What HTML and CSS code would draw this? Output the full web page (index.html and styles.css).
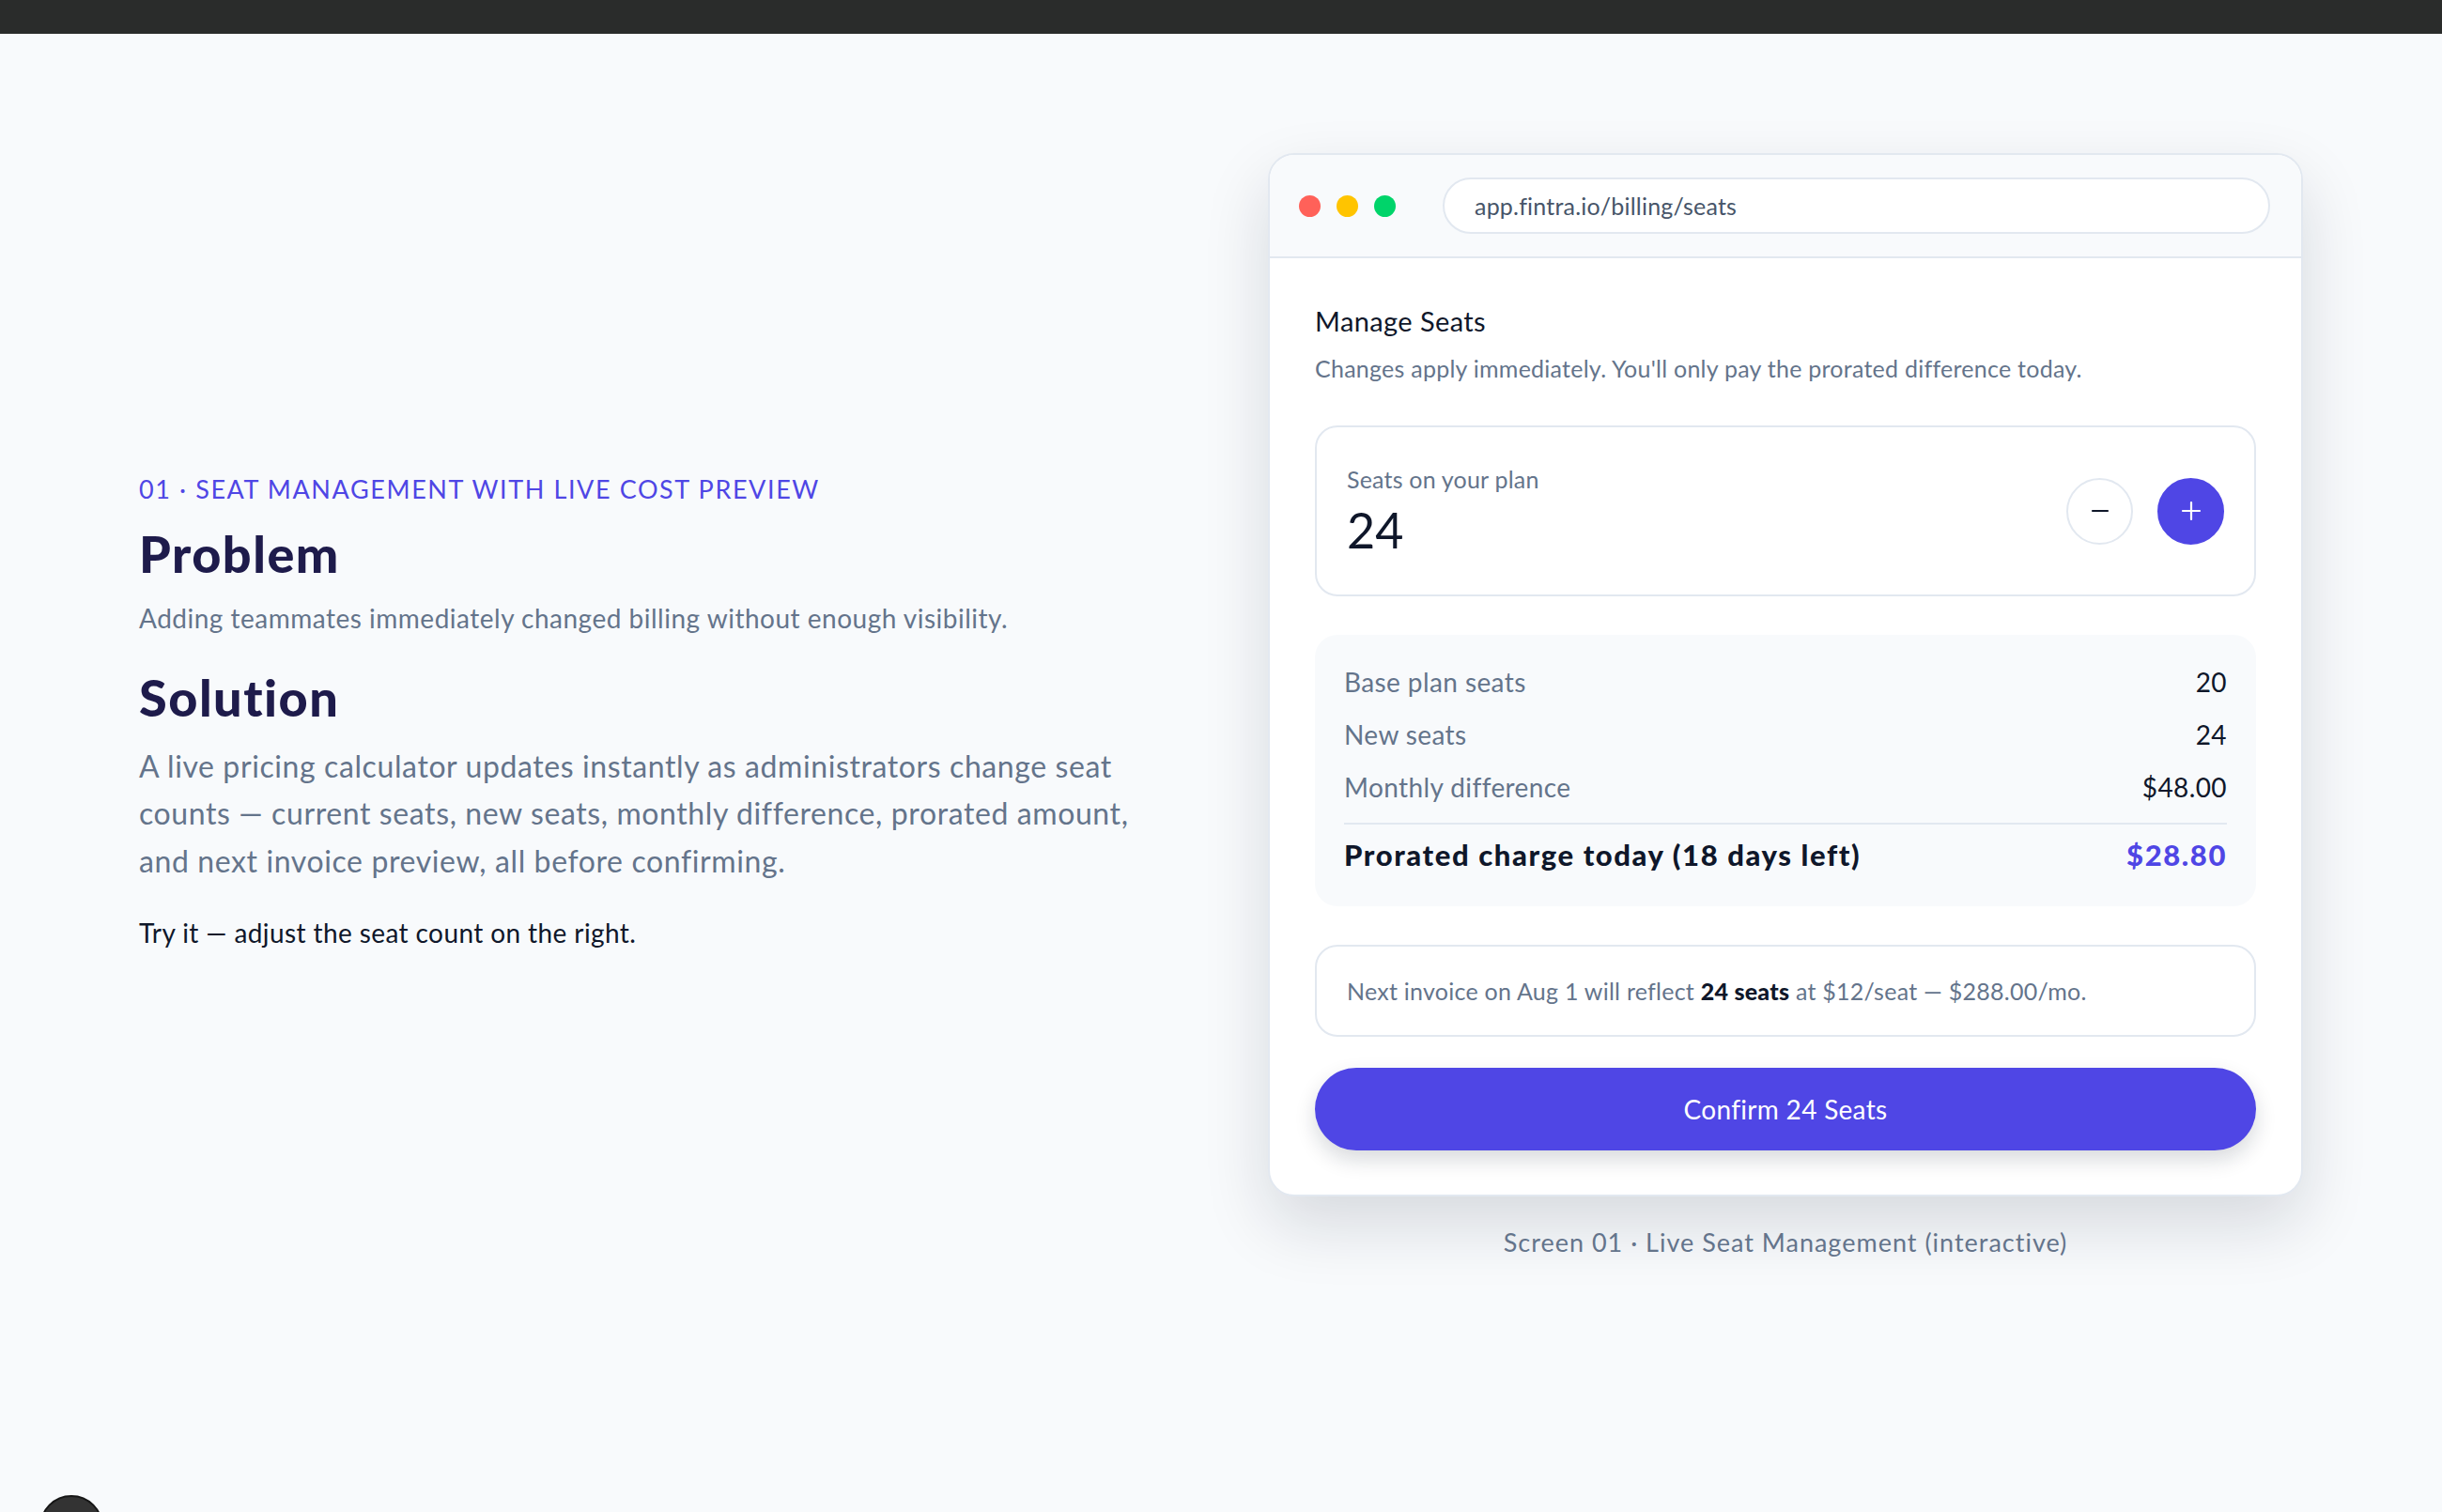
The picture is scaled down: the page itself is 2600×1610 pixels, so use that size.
FILE: index.html
```html
<!DOCTYPE html>
<html lang="en">
<head>
    <meta charset="UTF-8">
    <meta name="viewport" content="width=device-width, initial-scale=1.0">
    <title>Seat Management with Live Cost Preview</title>
    <link rel="stylesheet" href="styles.css">
</head>
<body>
    <div class="top-bar"></div>

    <main class="case-section">
        <div class="case-text">
            <p class="eyebrow">01 · Seat Management with Live Cost Preview</p>
            <h2 class="case-heading">Problem</h2>
            <p class="case-copy">Adding teammates immediately changed billing without enough visibility.</p>
            <h2 class="case-heading">Solution</h2>
            <p class="case-copy case-copy-large">A live pricing calculator updates instantly as administrators change seat counts — current seats, new seats, monthly difference, prorated amount, and next invoice preview, all before confirming.</p>
            <p class="case-hint">Try it — adjust the seat count on the right.</p>
        </div>

        <figure class="screen">
            <div class="browser-window">
                <div class="browser-bar">
                    <div class="dots">
                        <span class="dot dot-red"></span>
                        <span class="dot dot-yellow"></span>
                        <span class="dot dot-green"></span>
                    </div>
                    <div class="url-bar">app.fintra.io/billing/seats</div>
                </div>

                <div class="browser-body">
                    <h3 class="panel-title">Manage Seats</h3>
                    <p class="panel-subtitle">Changes apply immediately. You'll only pay the prorated difference today.</p>

                    <div class="seat-picker">
                        <div>
                            <div class="seat-label">Seats on your plan</div>
                            <div class="seat-count" id="seatCount">24</div>
                        </div>
                        <div class="stepper">
                            <button class="step-button" id="minusSeat" aria-label="Remove seat">
                                <svg width="22" height="22" viewBox="0 0 22 22"><path d="M3 11h16" stroke="#0f172a" stroke-width="2.2" stroke-linecap="round"/></svg>
                            </button>
                            <button class="step-button step-button-primary" id="plusSeat" aria-label="Add seat">
                                <svg width="24" height="24" viewBox="0 0 24 24"><path d="M12 3v18M3 12h18" stroke="#ffffff" stroke-width="2.2" stroke-linecap="round"/></svg>
                            </button>
                        </div>
                    </div>

                    <div class="summary">
                        <div class="summary-row">
                            <span>Base plan seats</span>
                            <span class="summary-value">20</span>
                        </div>
                        <div class="summary-row">
                            <span>New seats</span>
                            <span class="summary-value" id="newSeats">24</span>
                        </div>
                        <div class="summary-row">
                            <span>Monthly difference</span>
                            <span class="summary-value" id="monthlyDiff">$48.00</span>
                        </div>
                        <div class="summary-row summary-total">
                            <span>Prorated charge today (18 days left)</span>
                            <span class="summary-accent" id="prorated">$28.80</span>
                        </div>
                    </div>

                    <p class="invoice-note">Next invoice on Aug 1 will reflect <strong id="invoiceSeats">24 seats</strong> at $12/seat — <span id="invoiceTotal">$288.00</span>/mo.</p>

                    <button class="confirm-button" id="confirmButton">Confirm 24 Seats</button>
                </div>
            </div>
            <figcaption class="screen-caption">Screen 01 · Live Seat Management (interactive)</figcaption>
        </figure>
    </main>

    <button class="floating-button" aria-label="Menu"></button>

    <script src="script.js"></script>
</body>
</html>
```

FILE: styles.css
```css
/* Basic Reset */
* {
    margin: 0;
    padding: 0;
    box-sizing: border-box;
}

body {
    font-family: 'Lato', 'Noto Sans', sans-serif;
    background-color: #f8fafc;
    color: #0f172a;
    min-height: 100vh;
}

.top-bar {
    height: 36px;
    background-color: #2a2c2b;
}

.case-section {
    display: grid;
    grid-template-columns: 1102px 1102px;
    gap: 100px;
    align-items: center;
    justify-content: center;
    padding: 127px 0 120px;
}

/* Left column */
.case-text {
    padding-top: 14px;
}

.eyebrow {
    font-size: 27px;
    line-height: 36px;
    letter-spacing: 1.6px;
    text-transform: uppercase;
    color: #4f46e5;
    margin-bottom: 19px;
}

.case-heading {
    font-size: 54px;
    line-height: 64px;
    font-weight: 900;
    letter-spacing: 1.5px;
    color: #1e1b4b;
    margin-bottom: 16px;
}

.case-copy {
    font-size: 28px;
    line-height: 40px;
    letter-spacing: 0.5px;
    color: #64748b;
    margin-bottom: 33px;
}

.case-copy-large {
    font-size: 32px;
    line-height: 50.5px;
    letter-spacing: 0.6px;
    margin-top: 2px;
    margin-bottom: 31px;
}

.case-hint {
    font-size: 28px;
    line-height: 40px;
    letter-spacing: 0.4px;
    color: #0f172a;
}

/* Right column: browser mockup */
.screen {
    display: flex;
    flex-direction: column;
    align-items: center;
}

.browser-window {
    width: 100%;
    background-color: #ffffff;
    border: 2px solid #e2e8f0;
    border-radius: 28px;
    overflow: hidden;
    box-shadow: 0 30px 70px rgba(15, 23, 42, 0.14);
}

.browser-bar {
    display: flex;
    align-items: center;
    gap: 50px;
    height: 110px;
    padding: 0 33px 0 31px;
    background-color: #f8fafc;
    border-bottom: 2px solid #e2e8f0;
}

.dots {
    display: flex;
    gap: 17px;
}

.dot {
    width: 23px;
    height: 23px;
    border-radius: 50%;
}

.dot-red { background-color: #ff6159; }
.dot-yellow { background-color: #ffc400; }
.dot-green { background-color: #00d46a; }

.url-bar {
    flex: 1;
    height: 60px;
    display: flex;
    align-items: center;
    padding: 0 32px;
    background-color: #ffffff;
    border: 2px solid #e2e8f0;
    border-radius: 30px;
    font-size: 25px;
    letter-spacing: 0.2px;
    color: #475569;
}

.browser-body {
    padding: 49px 48px 47px;
}

.panel-title {
    font-size: 29px;
    line-height: 36px;
    font-weight: 400;
    letter-spacing: 0.4px;
    color: #0f172a;
    margin-bottom: 16px;
}

.panel-subtitle {
    font-size: 25px;
    line-height: 32px;
    letter-spacing: 0.25px;
    color: #64748b;
    margin-bottom: 45px;
}

.seat-picker {
    display: flex;
    align-items: center;
    justify-content: space-between;
    height: 182px;
    padding: 0 32px 0 32px;
    border: 2px solid #e2e8f0;
    border-radius: 24px;
}

.seat-label {
    font-size: 25px;
    line-height: 32px;
    letter-spacing: 0.2px;
    color: #64748b;
    margin-bottom: 8px;
}

.seat-count {
    font-size: 52px;
    line-height: 60px;
    font-weight: 400;
    color: #0f172a;
}

.stepper {
    display: flex;
    gap: 26px;
}

.step-button {
    width: 71px;
    height: 71px;
    display: flex;
    align-items: center;
    justify-content: center;
    border: 2px solid #e2e8f0;
    border-radius: 50%;
    background-color: #ffffff;
    cursor: pointer;
}

.step-button-primary {
    background-color: #4f46e5;
    border-color: #4f46e5;
}

.summary {
    margin-top: 41px;
    padding: 22px 31px 35px;
    background-color: #f8fafc;
    border-radius: 24px;
}

.summary-row {
    display: flex;
    justify-content: space-between;
    align-items: baseline;
    font-size: 28px;
    line-height: 56px;
    letter-spacing: 0.4px;
    color: #64748b;
}

.summary-value {
    color: #0f172a;
}

.summary-total {
    margin-top: 10px;
    padding-top: 12px;
    border-top: 2px solid #e2e8f0;
    font-size: 31px;
    line-height: 40px;
    font-weight: 900;
    letter-spacing: 1.6px;
    color: #0f172a;
}

.summary-accent {
    color: #4f46e5;
}

.invoice-note {
    margin-top: 41px;
    height: 98px;
    padding: 0 32px;
    border: 2px solid #e2e8f0;
    border-radius: 24px;
    font-size: 25px;
    line-height: 94px;
    letter-spacing: 0.25px;
    color: #64748b;
}

.invoice-note strong {
    color: #0f172a;
    font-weight: 900;
}

.confirm-button {
    display: block;
    width: 100%;
    height: 88px;
    margin-top: 33px;
    border: none;
    border-radius: 44px;
    background-color: #4f46e5;
    color: #ffffff;
    font-family: inherit;
    font-size: 28px;
    letter-spacing: 0.3px;
    cursor: pointer;
    box-shadow: 0 10px 22px rgba(15, 23, 42, 0.16);
}

.screen-caption {
    margin-top: 33px;
    font-size: 27px;
    line-height: 1.2;
    letter-spacing: 1px;
    color: #64748b;
}

.floating-button {
    position: fixed;
    left: 42px;
    bottom: -50px;
    width: 68px;
    height: 68px;
    border-radius: 50%;
    background-color: #333333;
    border: 2px solid #161616;
}
```

FILE: script.js
```js
// Live seat calculator
const BASE_SEATS = 20;
const PRICE_PER_SEAT = 12;
const DAYS_LEFT = 18;
const DAYS_IN_CYCLE = 30;

let seats = 24;

function money(value) {
    return '$' + value.toFixed(2);
}

function render() {
    const diff = (seats - BASE_SEATS) * PRICE_PER_SEAT;
    const prorated = diff * DAYS_LEFT / DAYS_IN_CYCLE;

    document.getElementById('seatCount').textContent = seats;
    document.getElementById('newSeats').textContent = seats;
    document.getElementById('monthlyDiff').textContent = money(diff);
    document.getElementById('prorated').textContent = money(prorated);
    document.getElementById('invoiceSeats').textContent = seats + ' seats';
    document.getElementById('invoiceTotal').textContent = money(seats * PRICE_PER_SEAT);
    document.getElementById('confirmButton').textContent = 'Confirm ' + seats + ' Seats';
}

document.getElementById('minusSeat').addEventListener('click', () => {
    if (seats > 1) {
        seats--;
        render();
    }
});

document.getElementById('plusSeat').addEventListener('click', () => {
    seats++;
    render();
});

render();
```
